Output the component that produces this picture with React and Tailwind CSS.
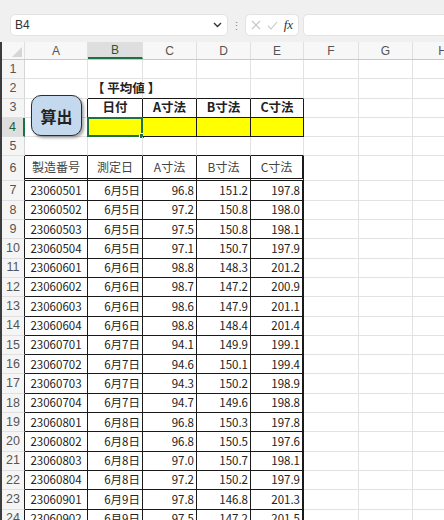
const COLS = ['A', 'B', 'C', 'D', 'E', 'F', 'G', 'H'];
const WIDTHS = ['w-[63px]', 'w-[55px]', 'w-[54px]', 'w-[54px]', 'w-[53px]', 'w-[55px]', 'w-[54px]', 'w-[60px]'];

const rows = [
    ['23060501', '6月5日', '96.8', '151.2', '197.8'],
    ['23060502', '6月5日', '97.2', '150.8', '198.0'],
    ['23060503', '6月5日', '97.5', '150.8', '198.1'],
    ['23060504', '6月5日', '97.1', '150.7', '197.9'],
    ['23060601', '6月6日', '98.8', '148.3', '201.2'],
    ['23060602', '6月6日', '98.7', '147.2', '200.9'],
    ['23060603', '6月6日', '98.6', '147.9', '201.1'],
    ['23060604', '6月6日', '98.8', '148.4', '201.4'],
    ['23060701', '6月7日', '94.1', '149.9', '199.1'],
    ['23060702', '6月7日', '94.6', '150.1', '199.4'],
    ['23060703', '6月7日', '94.3', '150.2', '198.9'],
    ['23060704', '6月7日', '94.7', '149.6', '198.8'],
    ['23060801', '6月8日', '96.8', '150.3', '197.8'],
    ['23060802', '6月8日', '96.8', '150.5', '197.6'],
    ['23060803', '6月8日', '97.0', '150.7', '198.1'],
    ['23060804', '6月8日', '97.2', '150.2', '197.9'],
    ['23060901', '6月9日', '97.8', '146.8', '201.3'],
    ['23060902', '6月9日', '97.5', '147.2', '201.5'],
];

const avgHeaders = ['日付', 'A寸法', 'B寸法', 'C寸法'];
const dataHeaders = ['製造番号', '測定日', 'A寸法', 'B寸法', 'C寸法'];

// which border each cell gets: light grid line or the dark table rule
const cellBorders = (r, c) => {
    const inAvg = (r === 3 || r === 4) && c >= 1 && c <= 4;
    const inData = r >= 6 && c <= 4;
    let right = 'border-r border-r-[#e2e2e2]';
    if (inData && c === 4) right = 'border-r-2 border-r-[#1a1a1a]';
    else if (inAvg || inData || ((r === 3 || r === 4) && c === 0)) right = 'border-r border-r-[#1a1a1a]';
    let bottom = 'border-b border-b-[#e2e2e2]';
    if (r === 6 && inData) bottom = 'border-b-[3px] border-double border-b-[#1a1a1a]';
    else if (inAvg || inData || (r === 2 && c >= 1 && c <= 4) || (r === 5 && c <= 4)) bottom = 'border-b border-b-[#1a1a1a]';
    return `${right} ${bottom}`;
};

const cellContent = (r, c) => {
    if (r === 2 && c === 1) return <span className="pl-[4px] font-bold whitespace-nowrap text-[12.5px]">【 平均値 】</span>;
    if (r === 3 && c >= 1 && c <= 4) return <span className="w-full text-center font-bold text-[12.5px]">{avgHeaders[c - 1]}</span>;
    if (r === 6 && c <= 4) return <span className="w-full text-center text-[12px] text-[#444]">{dataHeaders[c]}</span>;
    if (r >= 7 && c <= 4) {
        const v = rows[r - 7][c];
        return c === 0
            ? <span className="w-full text-center">{v}</span>
            : <span className="w-full text-right pr-[2px]">{v}</span>;
    }
    return null;
};

const rowHeight = (r) => (r === 6 ? 'h-[25px]' : 'h-[19.3px]');

export default function App() {
    const rowNums = Array.from({ length: 24 }, (_, i) => i + 1);

    return (
        <div className="w-[444px] h-[520px] overflow-hidden bg-white text-[#222]" style={{ fontFamily: '"Noto Sans CJK JP", "Noto Sans", sans-serif' }}>
            {/* formula bar */}
            <div className="h-[42px] bg-[#f0f0f0] flex items-start pt-[14px] pl-[10px] text-[13px]">
                <div className="w-[218px] h-[22px] bg-white rounded-[5px] border border-[#e3e3e3] flex items-center justify-between px-[4px] text-[#333]">
                    <span className="text-[12px]" style={{ fontFamily: '"Liberation Sans", sans-serif' }}>B4</span>
                    <svg width="9" height="6" viewBox="0 0 9 6" className="mr-[1px]"><path d="M1 1l3.5 3.5L8 1" fill="none" stroke="#333" strokeWidth="1.4" /></svg>
                </div>
                <span className="w-[17px] h-[22px] flex items-center justify-center text-[#888] text-[11px]">⋮</span>
                <div className="w-[54px] h-[22px] bg-white rounded-[5px] border border-[#e3e3e3] flex items-center justify-around px-[2px]">
                    <svg width="10" height="10" viewBox="0 0 10 10"><path d="M1 1l8 8M9 1l-8 8" stroke="#c4c4c4" strokeWidth="1.1" /></svg>
                    <svg width="11" height="9" viewBox="0 0 11 9"><path d="M1 4.5l3 3.5L10 1" fill="none" stroke="#c4c4c4" strokeWidth="1.1" /></svg>
                    <span className="italic text-[13px] text-[#333]" style={{ fontFamily: '"Liberation Serif", serif' }}>fx</span>
                </div>
                <div className="ml-[4px] flex-1 h-[22px] bg-white rounded-l-[5px] border border-r-0 border-[#e3e3e3]" />
            </div>

            <div className="relative border-l-2 border-[#3c3c3c]">
                {/* column headers */}
                <div className="flex h-[18px] bg-[#f7f7f7] border-b border-[#c9c9c9] text-[12px] text-[#555]" style={{ fontFamily: '"Liberation Sans", sans-serif' }}>
                    <div className="w-[23px] shrink-0 relative border-r border-[#e0e0e0]">
                        <svg width="10" height="10" viewBox="0 0 10 10" className="absolute right-[2px] bottom-[2px]"><path d="M10 0v10H0z" fill="#d6d6d6" /></svg>
                    </div>
                    {COLS.map((col, c) => (
                        <div key={col} className={`${WIDTHS[c]} shrink-0 flex items-center justify-center border-r border-[#e0e0e0] ${c === 1 ? 'bg-[#dedede] border-b-2 border-b-[#1e7145] text-[#1e5c37]' : ''}`}>
                            {col}
                        </div>
                    ))}
                </div>

                {/* sheet rows */}
                {rowNums.map((r) => (
                    <div key={r} className={`flex ${rowHeight(r)} text-[11.5px]`}>
                        <div
                            className={`w-[23px] shrink-0 flex items-center justify-center text-[12.5px] border-b border-b-[#e0e0e0] ${r === 4 ? 'bg-[#dedede] text-[#1e5c37] border-r-2 border-r-[#1e7145]' : 'bg-[#f5f5f5] text-[#555]'} ${r >= 6 ? 'border-r border-r-[#1a1a1a]' : r !== 4 ? 'border-r border-r-[#d6d6d6]' : ''}`}
                            style={{ fontFamily: '"Liberation Sans", sans-serif' }}
                        >
                            {r}
                        </div>
                        {COLS.map((col, c) => (
                            <div
                                key={col}
                                className={`${WIDTHS[c]} shrink-0 flex items-center relative ${cellBorders(r, c)} ${r === 4 && c >= 1 && c <= 4 ? 'bg-[#ffff00]' : ''}`}
                            >
                                {cellContent(r, c)}
                                {r === 4 && c === 1 && (
                                    <div className="absolute -left-[1px] -top-[1px] -right-[1px] -bottom-[1px] border-2 border-[#1e7145]">
                                        <div className="absolute -right-[4px] -bottom-[4px] w-[6px] h-[6px] bg-[#1e7145] border border-white" />
                                    </div>
                                )}
                            </div>
                        ))}
                    </div>
                ))}

                {/* 算出 button shape */}
                <div className="absolute left-[29px] top-[53px] w-[51px] h-[41px] rounded-[10px] bg-[#c5d9ee] border-[1.5px] border-[#2d2d2d] shadow-[2px_2px_3px_rgba(0,0,0,0.35)] flex items-center justify-center">
                    <span className="font-bold text-[16px] text-[#222]">算出</span>
                </div>
            </div>
        </div>
    );
}
